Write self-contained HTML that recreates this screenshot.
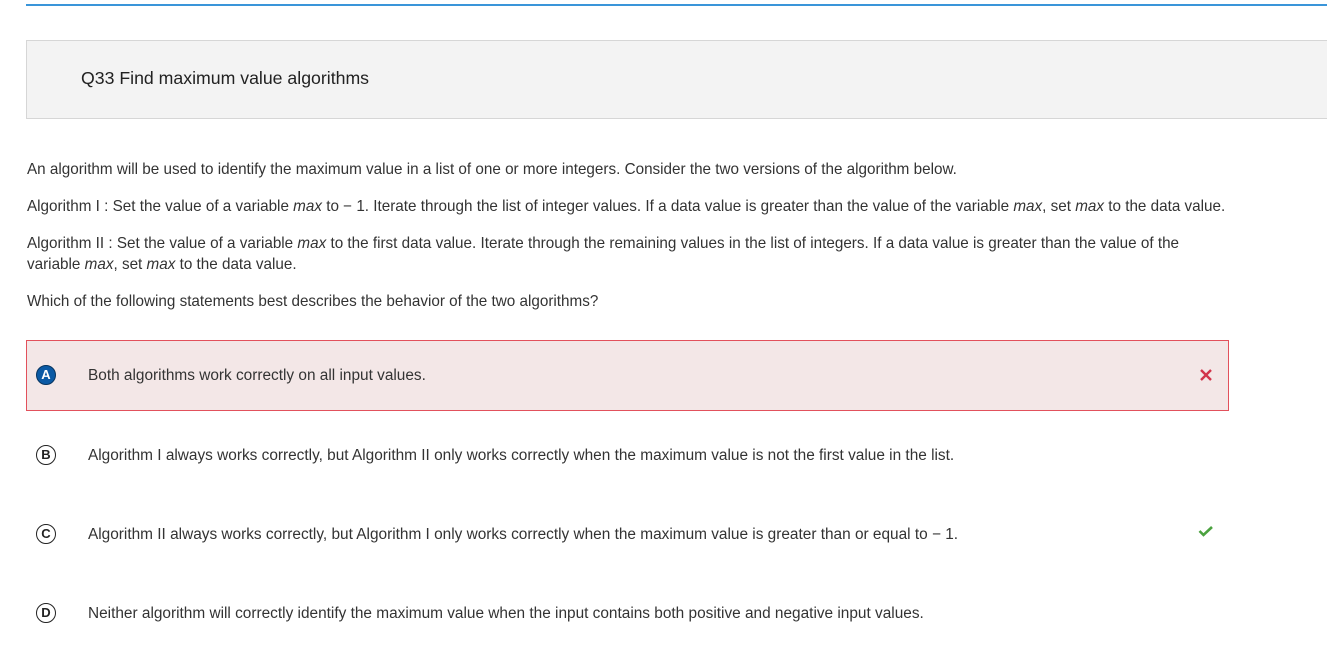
<!DOCTYPE html>
<html><head><style>
body{margin:0;width:1327px;height:662px;background:#fff;font-family:"Liberation Sans",Arial,sans-serif;color:#333;position:relative;overflow:hidden}
.bar{position:absolute;left:26px;top:4px;width:1301px;height:2px;background:#3a95d9}
.hdr{position:absolute;left:26px;top:40px;width:1301px;height:79px;background:#f3f3f3;border:1px solid #d6d6d6;border-right:none;box-sizing:border-box}
.hdr span{position:absolute;left:54px;top:27px;font-size:17.7px;color:#222}
.p{position:absolute;left:27px;font-size:15.25px;line-height:21px;color:#333;width:1220px}
.opt{position:absolute;left:26px;width:1203px;height:71px;box-sizing:border-box}
.opt.sel{background:#f3e7e7;border:1px solid #e2515c}
.c{position:absolute;left:10px;top:25px;width:18px;height:18px;border:1.5px solid #222;border-radius:50%;font-weight:bold;font-size:13px;text-align:center;line-height:18px;color:#222}
.sel .c{background:#0b5aa5;border-color:#07345f;color:#fff;left:9px;top:24px}
.t{position:absolute;left:62px;top:27px;font-size:15.4px;color:#333}
.sel .t{left:61px;top:26px}
.ic{position:absolute;left:1170px;top:24px;font-size:18px}
</style></head><body>
<div class="bar"></div>
<div class="hdr"><span>Q33 Find maximum value algorithms</span></div>
<div class="p" style="top:159px">An algorithm will be used to identify the maximum value in a list of one or more integers. Consider the two versions of the algorithm below.</div>
<div class="p" style="top:196px">Algorithm I : Set the value of a variable <i>max</i> to − 1. Iterate through the list of integer values. If a data value is greater than the value of the variable <i>max</i>, set <i>max</i> to the data value.</div>
<div class="p" style="top:233px;width:1175px">Algorithm II : Set the value of a variable <i>max</i> to the first data value. Iterate through the remaining values in the list of integers. If a data value is greater than the value of the<br>variable <i>max</i>, set <i>max</i> to the data value.</div>
<div class="p" style="top:291px">Which of the following statements best describes the behavior of the two algorithms?</div>
<div class="opt sel" style="top:340px"><div class="c">A</div><div class="t">Both algorithms work correctly on all input values.</div>
<svg class="ic" style="left:1172px;top:27px" width="14" height="14" viewBox="0 0 14 14"><path d="M2 2L12 12M12 2L2 12" stroke="#d2344a" stroke-width="2.4"/></svg></div>
<div class="opt" style="top:420px"><div class="c">B</div><div class="t">Algorithm I always works correctly, but Algorithm II only works correctly when the maximum value is not the first value in the list.</div></div>
<div class="opt" style="top:499px"><div class="c">C</div><div class="t">Algorithm II always works correctly, but Algorithm I only works correctly when the maximum value is greater than or equal to − 1.</div>
<svg class="ic" style="left:1172px;top:26px" width="16" height="12" viewBox="0 0 16 12"><path d="M1.5 6L5.5 10L14 2" stroke="#4ba23f" stroke-width="2.6" fill="none"/></svg></div>
<div class="opt" style="top:578px"><div class="c">D</div><div class="t">Neither algorithm will correctly identify the maximum value when the input contains both positive and negative input values.</div></div>
</body></html>
